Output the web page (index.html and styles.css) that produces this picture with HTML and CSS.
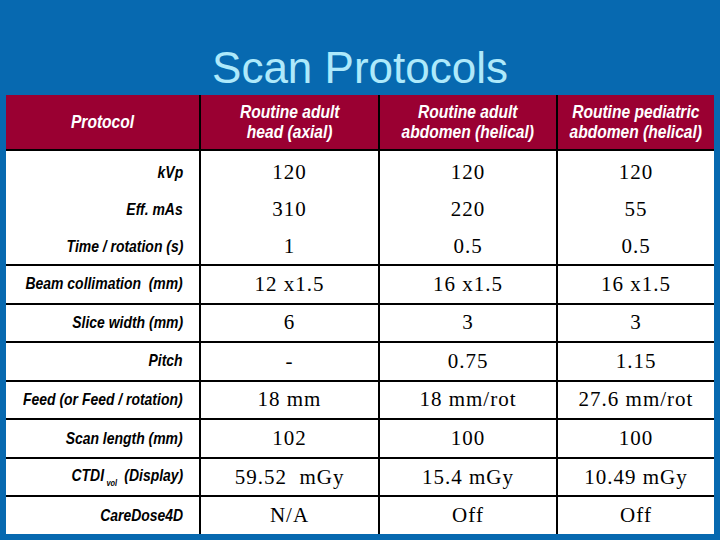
FILE: index.html
```html
<!DOCTYPE html>
<html lang="en">
<head>
<meta charset="utf-8">
<title>Scan Protocols</title>
<link rel="stylesheet" href="styles.css">
</head>
<body>
<div class="slide">
  <h1 class="title">Scan Protocols</h1>
  <div class="grid">
    <div class="hd hd-first"><span class="cn">Protocol</span></div>
    <div class="hd"><span class="cn">Routine adult<br>head (axial)</span></div>
    <div class="hd"><span class="cn">Routine adult<br>abdomen (helical)</span></div>
    <div class="hd"><span class="cn">Routine pediatric<br>abdomen (helical)</span></div>

    <div class="lb stack"><span class="cn">kVp</span><span class="cn">Eff. mAs</span><span class="cn">Time / rotation (s)</span></div>
    <div class="val stack"><span>120</span><span>310</span><span>1</span></div>
    <div class="val stack"><span>120</span><span>220</span><span>0.5</span></div>
    <div class="val stack"><span>120</span><span>55</span><span>0.5</span></div>

    <div class="lb"><span class="cn">Beam collimation&nbsp; (mm)</span></div>
    <div class="val">12 x1.5</div>
    <div class="val">16 x1.5</div>
    <div class="val">16 x1.5</div>

    <div class="lb"><span class="cn">Slice width (mm)</span></div>
    <div class="val">6</div>
    <div class="val">3</div>
    <div class="val">3</div>

    <div class="lb"><span class="cn">Pitch</span></div>
    <div class="val">-</div>
    <div class="val">0.75</div>
    <div class="val">1.15</div>

    <div class="lb"><span class="cn">Feed (or Feed / rotation)</span></div>
    <div class="val">18 mm</div>
    <div class="val">18 mm/rot</div>
    <div class="val">27.6 mm/rot</div>

    <div class="lb"><span class="cn">Scan length (mm)</span></div>
    <div class="val">102</div>
    <div class="val">100</div>
    <div class="val">100</div>

    <div class="lb"><span class="cn">CTDI<sub class="sub">vol</sub> (Display)</span></div>
    <div class="val">59.52&nbsp; mGy</div>
    <div class="val">15.4 mGy</div>
    <div class="val">10.49 mGy</div>

    <div class="lb"><span class="cn">CareDose4D</span></div>
    <div class="val">N/A</div>
    <div class="val">Off</div>
    <div class="val">Off</div>
  </div>
</div>
</body>
</html>
```

FILE: styles.css
```css
html, body {
  margin: 0;
  padding: 0;
}
body {
  background: #0769b0;
  width: 720px;
  height: 540px;
  overflow: hidden;
}
.slide {
  width: 720px;
  height: 540px;
  padding-top: 46px;
  box-sizing: border-box;
}
.title {
  margin: 0;
  height: 44px;
  font-family: "Liberation Sans", Arial, sans-serif;
  font-weight: normal;
  font-size: 44px;
  line-height: 44px;
  color: #aee9fb;
  text-align: center;
}
.grid {
  margin: 5px 0 0 6px;
  width: 708px;
  height: 439px;
  display: grid;
  grid-template-columns: 193px 177px 176px 156px;
  grid-template-rows: 54px 113px repeat(7, 1fr);
  gap: 2px;
  background: #000;
}
.cn {
  display: inline-block;
  white-space: nowrap;
}
.hd {
  background: #9a0032;
  color: #fff;
  font-family: "Liberation Sans", Arial, sans-serif;
  font-weight: bold;
  font-style: italic;
  font-size: 19px;
  line-height: 20px;
  display: flex;
  align-items: center;
  justify-content: center;
  text-align: center;
  overflow: visible;
}
.hd .cn {
  transform: scaleX(0.82);
  transform-origin: 50% 50%;
}
.lb, .val {
  background: #fff;
  color: #000;
  display: flex;
  align-items: center;
}
.lb {
  justify-content: flex-end;
  padding-right: 16px;
  font-family: "Liberation Sans", Arial, sans-serif;
  font-weight: bold;
  font-style: italic;
  font-size: 17px;
  white-space: nowrap;
  min-width: 0;
}
.lb .cn {
  transform: scaleX(0.82);
  transform-origin: 100% 50%;
  flex-shrink: 0;
}
.val {
  justify-content: center;
  font-family: "Liberation Serif", "Times New Roman", serif;
  font-size: 21px;
  letter-spacing: 1px;
  white-space: nowrap;
}
.stack {
  flex-direction: column;
  justify-content: flex-start;
  padding-top: 3px;
}
.stack span {
  line-height: 37px;
  height: 37px;
}
.lb.stack {
  align-items: flex-end;
}
.val.stack {
  align-items: center;
}
.sub {
  font-size: 9px;
  vertical-align: -5px;
  margin: 0 4px 0 3px;
}
```
